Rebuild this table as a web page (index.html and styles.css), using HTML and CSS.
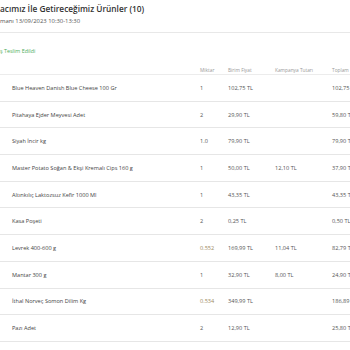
FILE: index.html
```html
<!DOCTYPE html>
<html lang="tr">
<head>
<meta charset="utf-8">
<link rel="stylesheet" href="styles.css">
</head>
<body>
<div class="page">
  <header class="head">
    <h1 class="title">acımız İle Getireceğimiz Ürünler (10)</h1>
    <p class="sub">manı 13/09/2023 10:30-13:30</p>
  </header>
  <div class="status">ş Teslim Edildi</div>
  <table class="items">
    <thead>
      <tr><th class="c-name"></th><th class="c-qty">Miktar</th><th class="c-unit">Birim Fiyat</th><th class="c-camp">Kampanya Tutarı</th><th class="c-total">Toplam</th></tr>
    </thead>
    <tbody>
      <tr><td class="c-name">Blue Heaven Danish Blue Cheese 100 Gr</td><td class="c-qty">1</td><td class="c-unit">102,75 TL</td><td class="c-camp"></td><td class="c-total">102,75 TL</td></tr>
      <tr><td class="c-name">Pitahaya Ejder Meyvesi Adet</td><td class="c-qty">2</td><td class="c-unit">29,90 TL</td><td class="c-camp"></td><td class="c-total">59,80 TL</td></tr>
      <tr><td class="c-name">Siyah İncir kg</td><td class="c-qty">1.0</td><td class="c-unit">79,90 TL</td><td class="c-camp"></td><td class="c-total">79,90 TL</td></tr>
      <tr><td class="c-name">Master Potato Soğan &amp; Ekşi Kremalı Cips 160 g</td><td class="c-qty">1</td><td class="c-unit">50,00 TL</td><td class="c-camp">12,10 TL</td><td class="c-total">37,90 TL</td></tr>
      <tr><td class="c-name">Altınkılıç Laktozsuz Kefir 1000 Ml</td><td class="c-qty">1</td><td class="c-unit">43,35 TL</td><td class="c-camp"></td><td class="c-total">43,35 TL</td></tr>
      <tr><td class="c-name">Kasa Poşeti</td><td class="c-qty">2</td><td class="c-unit">0,25 TL</td><td class="c-camp"></td><td class="c-total">0,50 TL</td></tr>
      <tr><td class="c-name">Levrek 400-600 g</td><td class="c-qty frac">0.552</td><td class="c-unit">169,99 TL</td><td class="c-camp">11,04 TL</td><td class="c-total">82,79 TL</td></tr>
      <tr><td class="c-name">Mantar 300 g</td><td class="c-qty">1</td><td class="c-unit">32,90 TL</td><td class="c-camp">8,00 TL</td><td class="c-total">24,90 TL</td></tr>
      <tr><td class="c-name">İthal Norveç Somon Dilim Kg</td><td class="c-qty frac">0.534</td><td class="c-unit">349,99 TL</td><td class="c-camp"></td><td class="c-total">186,89 TL</td></tr>
      <tr><td class="c-name">Pazı Adet</td><td class="c-qty">2</td><td class="c-unit">12,90 TL</td><td class="c-camp"></td><td class="c-total">25,80 TL</td></tr>
    </tbody>
  </table>
</div>
</body>
</html>
```
FILE: styles.css
```css
html, body {
  margin: 0;
  padding: 0;
  background: #fff;
  overflow: hidden;
}
body {
  font-family: "Open Sans", Lato, sans-serif;
  color: #444;
  width: 350px;
  height: 350px;
}
.page {
  width: 420px;
}
.head {
  border-bottom: 1px solid #e8e8e8;
  padding: 4px 0 7px;
}
.title {
  margin: 0;
  font-size: 8.3px;
  font-weight: 600;
  color: #333;
  line-height: 10px;
}
.sub {
  margin: 3px 0 0;
  font-size: 5.9px;
  color: #555;
  line-height: 8px;
}
.status {
  margin: 14px 0 0;
  font-size: 5.4px;
  color: #4cae5c;
  line-height: 8px;
}
.items {
  margin-top: 10px;
  border-collapse: collapse;
  table-layout: fixed;
  width: 420px;
}
.items th {
  font-weight: 400;
  font-size: 4.8px;
  color: #999;
  text-align: left;
  height: 9px;
  padding: 0;
  border-bottom: 1px solid #ececec;
  vertical-align: middle;
}
.items td {
  height: 25.7px;
  padding: 0;
  font-size: 5.6px;
  color: #555;
  text-align: left;
  vertical-align: middle;
  border-bottom: 1px solid #e6e6e6;
}
.items td.c-name {
  color: #444;
  padding-left: 12px;
}
.c-name { width: 200px; }
.c-qty { width: 28px; }
.c-unit { width: 47px; }
.c-camp { width: 57px; }
.c-total { width: 88px; }
.items td.frac { color: #9c8b5e; }
```
